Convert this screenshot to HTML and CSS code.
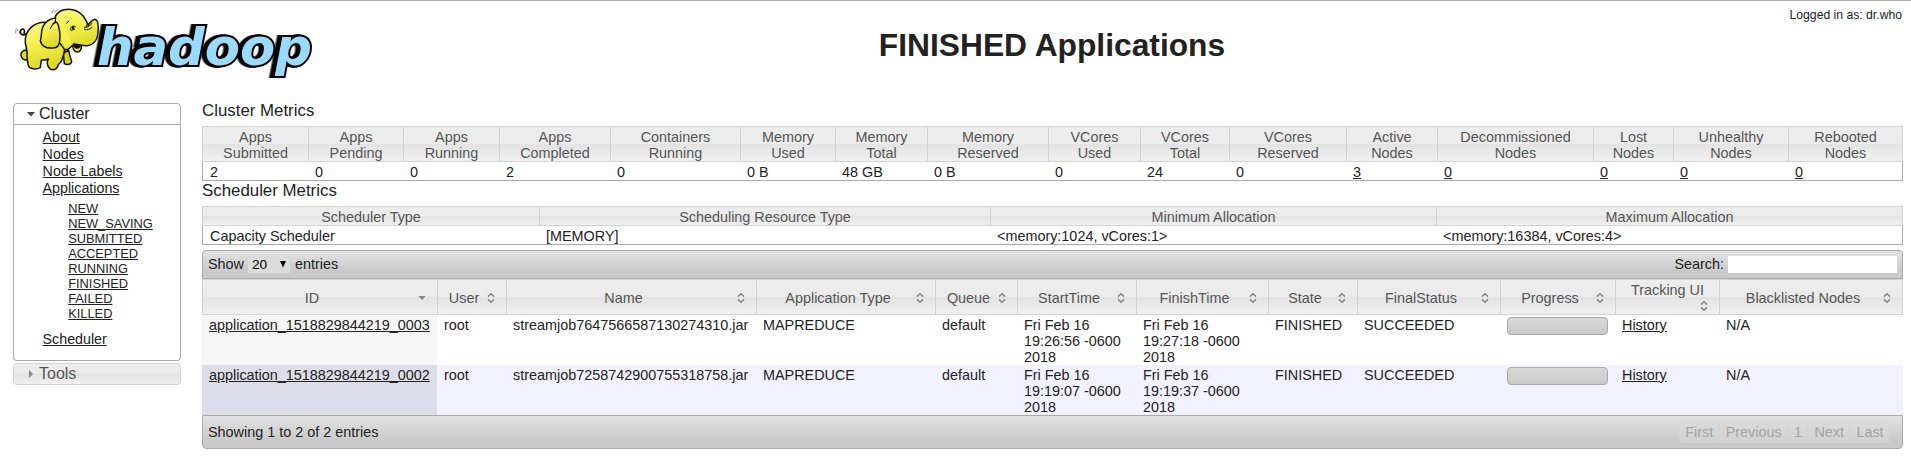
FILE: index.html
```html
<!DOCTYPE html>
<html lang="en">
<head>
<meta charset="utf-8">
<title>FINISHED Applications</title>
<link rel="stylesheet" href="styles.css">
</head>
<body>
<svg class="defs" aria-hidden="true">
  <symbol id="sort-both" viewBox="0 0 16 16"><path d="M5 6.6 L8 3.8 L11 6.6 M5 9.4 L8 12.2 L11 9.4" fill="none" stroke="#888" stroke-width="1.5"/></symbol>
  <symbol id="sort-down" viewBox="0 0 16 16"><path d="M4.4 6 H11.6 L8 10 Z" fill="#888"/></symbol>
</svg>
<div class="page">
<header class="header">
  <div class="logo">
    <svg width="330" height="100" viewBox="0 0 990 300" role="img" aria-label="hadoop">
      <defs>
        <linearGradient id="skin" x1="0" y1="0" x2=".25" y2="1"><stop offset="0" stop-color="#fbf98a"/><stop offset=".5" stop-color="#f5f04e"/><stop offset="1" stop-color="#dcd728"/></linearGradient>
      </defs>
      <text class="word" x="291" y="195" textLength="645" lengthAdjust="spacingAndGlyphs">hadoop</text>
      <g stroke="#141400" stroke-width="4.5" stroke-linejoin="round" stroke-linecap="round">
        <path d="M80 100 C66 112 56 98 63 90 C70 84 77 91 72 99" fill="none" stroke-width="5"/>
        <path d="M190 160 L193 191 C202 196 214 193 215 184 C211 172 208 164 206 150 Z" fill="#d8d22c"/>
        <path d="M76 150 C62 154 60 164 65 172 C70 180 78 182 84 178 L90 160 Z" fill="#dfd92f"/>
        <path d="M138 67 C100 66 73 92 76 128 C78 144 83 152 81 166 C83 184 82 194 88 202 C98 208 112 207 121 203 L124 180 C132 181 138 180 145 177 C140 187 142 199 150 207 C160 212 173 208 174 195 C184 188 191 170 194 146 L200 80 Z" fill="url(#skin)"/>
        <path d="M218 132 C217 146 223 156 233 156 C242 155 246 145 243 136 Z" fill="#f3ee55"/>
        <path d="M221 132 C224 146 235 149 241 137 Z" fill="#201508"/>
        <path d="M166 50 C175 29 205 22 230 33 C248 41 257 56 264 75 C270 70 276 58 286 58 C295 62 296 80 294 98 C293 118 282 134 262 137 C246 138 232 132 222 132 C213 142 203 152 194 149 L165 110 Z" fill="url(#skin)"/>
        <path d="M170 78 L196 145 L215 128 L196 70 Z" fill="#f4ef52" stroke="none"/>
        <path d="M167 54 C150 55 133 67 128 82 C122 96 126 110 121 122 C124 138 139 146 157 144 C171 145 178 137 179 123 C181 110 181 98 177 84 C174 70 171 60 158 73" fill="url(#skin)"/>
        <path d="M211 88 C213 77 222 76 227 81 M213 91 L224 88 M199 70 L207 63 M266 76 C260 71 257 74 260 81 M253 82 C263 82 270 79 276 70 M253 88 C263 91 270 87 276 82 M158 73 L151 86" fill="none" stroke-width="3"/>
        <ellipse cx="219" cy="83" rx="4" ry="5" stroke="none" fill="#181800"/>
        <path d="M156 38 L162 29 M163 37 L174 29 M47 99 L48 88 M54 92 L52 86" fill="none" stroke="#777790" stroke-width="2.5"/>
      </g>
    </svg>
  </div>
  <h1>FINISHED Applications</h1>
  <div class="user">Logged in as: dr.who</div>
</header>
<div class="columns">
<nav class="nav">
  <h3 class="nav-head open"><svg width="16" height="16"><path d="M4 6 H12 L8 10.5 Z" fill="#444"/></svg>Cluster</h3>
  <div class="nav-body">
    <ul>
      <li><a href="#">About</a></li>
      <li><a href="#">Nodes</a></li>
      <li><a href="#">Node Labels</a></li>
      <li><a href="#">Applications</a>
        <ul class="states">
          <li><a href="#">NEW</a></li>
          <li><a href="#">NEW_SAVING</a></li>
          <li><a href="#">SUBMITTED</a></li>
          <li><a href="#">ACCEPTED</a></li>
          <li><a href="#">RUNNING</a></li>
          <li><a href="#">FINISHED</a></li>
          <li><a href="#">FAILED</a></li>
          <li><a href="#">KILLED</a></li>
        </ul>
      </li>
      <li><a href="#">Scheduler</a></li>
    </ul>
  </div>
  <h3 class="nav-head closed"><svg width="16" height="16"><path d="M6 4 V12 L10 8 Z" fill="#888"/></svg>Tools</h3>
</nav>
<main class="content">
  <h2>Cluster Metrics</h2>
  <table class="metrics">
    <colgroup><col style="width:106px"><col style="width:95px"><col style="width:96px"><col style="width:111px"><col style="width:130px"><col style="width:95px"><col style="width:92px"><col style="width:121px"><col style="width:92px"><col style="width:89px"><col style="width:117px"><col style="width:91px"><col style="width:156px"><col style="width:80px"><col style="width:115px"><col style="width:115px"></colgroup>
    <thead><tr><th>Apps<br>Submitted</th><th>Apps<br>Pending</th><th>Apps<br>Running</th><th>Apps<br>Completed</th><th>Containers<br>Running</th><th>Memory<br>Used</th><th>Memory<br>Total</th><th>Memory<br>Reserved</th><th>VCores<br>Used</th><th>VCores<br>Total</th><th>VCores<br>Reserved</th><th>Active<br>Nodes</th><th>Decommissioned<br>Nodes</th><th>Lost<br>Nodes</th><th>Unhealthy<br>Nodes</th><th>Rebooted<br>Nodes</th></tr></thead>
    <tbody><tr><td>2</td><td>0</td><td>0</td><td>2</td><td>0</td><td>0 B</td><td>48 GB</td><td>0 B</td><td>0</td><td>24</td><td>0</td><td><a href="#">3</a></td><td><a href="#">0</a></td><td><a href="#">0</a></td><td><a href="#">0</a></td><td><a href="#">0</a></td></tr></tbody>
  </table>
  <h2 class="second">Scheduler Metrics</h2>
  <table class="metrics">
    <colgroup><col style="width:337px"><col style="width:451px"><col style="width:446px"><col style="width:467px"></colgroup>
    <thead><tr><th>Scheduler Type</th><th>Scheduling Resource Type</th><th>Minimum Allocation</th><th>Maximum Allocation</th></tr></thead>
    <tbody><tr><td>Capacity Scheduler</td><td>[MEMORY]</td><td>&lt;memory:1024, vCores:1&gt;</td><td>&lt;memory:16384, vCores:4&gt;</td></tr></tbody>
  </table>
  <div class="bar bar-top">
    <div class="length">Show <span class="select">20<svg width="6" height="7"><path d="M0 0 H6 L3 6.6 Z" fill="#000"/></svg></span> entries</div>
    <label class="search">Search: <input type="text"></label>
  </div>
  <table class="apps">
    <colgroup><col style="width:235px"><col style="width:69px"><col style="width:250px"><col style="width:179px"><col style="width:82px"><col style="width:119px"><col style="width:132px"><col style="width:89px"><col style="width:143px"><col style="width:115px"><col style="width:104px"><col style="width:184px"></colgroup>
    <thead><tr>
      <th><svg><use href="#sort-down"/></svg>ID</th>
      <th><svg><use href="#sort-both"/></svg>User</th>
      <th><svg><use href="#sort-both"/></svg>Name</th>
      <th><svg><use href="#sort-both"/></svg>Application Type</th>
      <th><svg><use href="#sort-both"/></svg>Queue</th>
      <th><svg><use href="#sort-both"/></svg>StartTime</th>
      <th><svg><use href="#sort-both"/></svg>FinishTime</th>
      <th><svg><use href="#sort-both"/></svg>State</th>
      <th><svg><use href="#sort-both"/></svg>FinalStatus</th>
      <th><svg><use href="#sort-both"/></svg>Progress</th>
      <th>Tracking UI<br><svg><use href="#sort-both"/></svg></th>
      <th><svg><use href="#sort-both"/></svg>Blacklisted Nodes</th>
    </tr></thead>
    <tbody>
      <tr class="odd"><td><a href="#">application_1518829844219_0003</a></td><td>root</td><td>streamjob7647566587130274310.jar</td><td>MAPREDUCE</td><td>default</td><td>Fri Feb 16<br>19:26:56 -0600<br>2018</td><td>Fri Feb 16<br>19:27:18 -0600<br>2018</td><td>FINISHED</td><td>SUCCEEDED</td><td><div class="progress"></div></td><td><a href="#">History</a></td><td>N/A</td></tr>
      <tr class="even"><td><a href="#">application_1518829844219_0002</a></td><td>root</td><td>streamjob7258742900755318758.jar</td><td>MAPREDUCE</td><td>default</td><td>Fri Feb 16<br>19:19:07 -0600<br>2018</td><td>Fri Feb 16<br>19:19:37 -0600<br>2018</td><td>FINISHED</td><td>SUCCEEDED</td><td><div class="progress"></div></td><td><a href="#">History</a></td><td>N/A</td></tr>
    </tbody>
  </table>
  <div class="bar bar-bottom">
    <div>Showing 1 to 2 of 2 entries</div>
    <div class="pager"><span>First</span><span>Previous</span><span>1</span><span>Next</span><span>Last</span></div>
  </div>
</main>
</div>
</div>
</body>
</html>
```
FILE: styles.css
```css
* { box-sizing: border-box; }
body {
  margin: 0;
  height: 457px;
  overflow: hidden;
  background: #fff;
  color: #222;
  font: 14.4px/16px "Liberation Sans", Arial, sans-serif;
}
a { color: inherit; text-decoration: underline; }
ul { list-style: none; margin: 0; padding: 0; }
h1, h2, h3 { margin: 0; font-weight: normal; }
.defs { display: block; width: 0; height: 0; }
.page { border-top: 1px solid #aaa; }

.header {
  display: grid;
  grid-template-columns: 202px 1fr 202px;
  height: 102px;
}
.logo { grid-area: 1 / 1; margin-top: -1px; width: 330px; }
.logo svg { display: block; }
.word {
  font: italic bold 153px "DejaVu Sans", sans-serif;
  fill: #9adafc;
  stroke: #000;
  stroke-width: 12px;
  stroke-linejoin: miter;
  stroke-miterlimit: 3;
  paint-order: stroke;
  filter: drop-shadow(-5px 0 0 #000) drop-shadow(-5px 0 0 #000);
}
.header h1 {
  grid-area: 1 / 2 / 2 / 4;
  padding-top: 26px;
  padding-right: 9px;
  font-size: 31.75px;
  line-height: 37px;
  font-weight: bold;
  text-align: center;
}
.user { grid-area: 1 / 3; padding: 7px 9px 0 0; font-size: 12.2px; line-height: 14px; text-align: right; }

.columns { display: flex; }
.nav { width: 168px; margin-left: 13px; margin-right: 21px; }
.nav-head {
  display: flex;
  align-items: center;
  height: 22px;
  padding-left: 9px;
  font-size: 16px;
  border: 1px solid #aaa;
}
.nav-head.open { border-radius: 4px 4px 0 0; color: #212121; }
.nav-head.closed {
  margin-top: 2px;
  border-color: #d3d3d3;
  border-radius: 4px;
  color: #555;
  background: linear-gradient(#eee, #eaeaea 50%, #e3e3e3 50%, #f0f0f0);
}
.nav-body {
  height: 236px;
  padding: 4px 0 0 28.6px;
  border: 1px solid #aaa;
  border-top: 0;
  border-radius: 0 0 4px 4px;
  font-size: 14.256px;
  line-height: 17px;
}
.states {
  padding: 4px 0 10px 25.6px;
  font-size: 12.83px;
  line-height: 15px;
}

.content { width: 1701px; }
.content h2 { font-size: 16.85px; line-height: 15px; height: 23px; }
.content h2.second { height: 25px; line-height: 19px; }

table { table-layout: fixed; border-collapse: separate; border-spacing: 0; width: 1701px; }
th {
  padding: 0;
  border: 1px solid #d3d3d3;
  border-right-width: 0;
  color: #555;
  font-weight: normal;
  background: linear-gradient(#ededed, #ebebeb 50%, #e3e3e3 50%, #f0f0f0);
}
th:last-child { border-right-width: 1px; }
td { padding: 0; vertical-align: top; }
.metrics th { padding-top: 2px; }
.metrics tbody td { padding: 2px 0 0 7px; height: 19px; border-bottom: 1px solid #aaa; }
.metrics tbody td:first-child { border-left: 1px solid #aaa; }
.metrics tbody td:last-child { border-right: 1px solid #aaa; }

.bar {
  display: flex;
  justify-content: space-between;
  padding: 5px;
  border: 1px solid #aaa;
  background: linear-gradient(#e2e2e2, #cacaca 75%, #cacaca);
}
.bar-top { height: 29px; margin-top: 5px; border-radius: 4px 4px 0 0; }
.bar-bottom { height: 34px; border-radius: 0 0 4px 4px; padding: 6px 12px 0 5px; line-height: 21px; }
.length, .search { display: flex; line-height: 17px; }
.select {
  display: flex;
  align-items: center;
  justify-content: space-between;
  width: 42px;
  height: 17px;
  margin: 0 5px 0 4px;
  padding: 0 4px;
  color: #000;
  font-size: 13.7px;
  background: #dcdcdc;
}
.search input { width: 169px; height: 17px; margin: 0 0 0 4px; padding: 0; border: 0; background: #fff; }

.apps th { height: 36px; padding: 1px 7px 0; }
.apps th svg { float: right; width: 16px; height: 16px; }
.apps td { height: 50px; padding: 2px 7px 0; white-space: nowrap; }
.apps .odd td:first-child { background: #f6f6f6; }
.apps .even td { background: #f1f1ff; }
.apps .even td:first-child { background: #dedeea; }
.progress {
  height: 18px;
  border: 1px solid #aaa;
  border-radius: 4px;
  background: linear-gradient(#d8d8d8, #cbcbcb);
}
.pager { display: flex; height: 21px; color: #a4a4a4; }
.pager span {
  padding: 0 5.4px 0 6px;
  border: 1px solid #d4d4d4;
  border-left-width: 0;
  line-height: 19px;
  background: linear-gradient(#dadada, #d2d2d2);
}
.pager span:first-child { border-left-width: 1px; border-radius: 4px 0 0 4px; }
.pager span:last-child { border-radius: 0 4px 4px 0; }
```
